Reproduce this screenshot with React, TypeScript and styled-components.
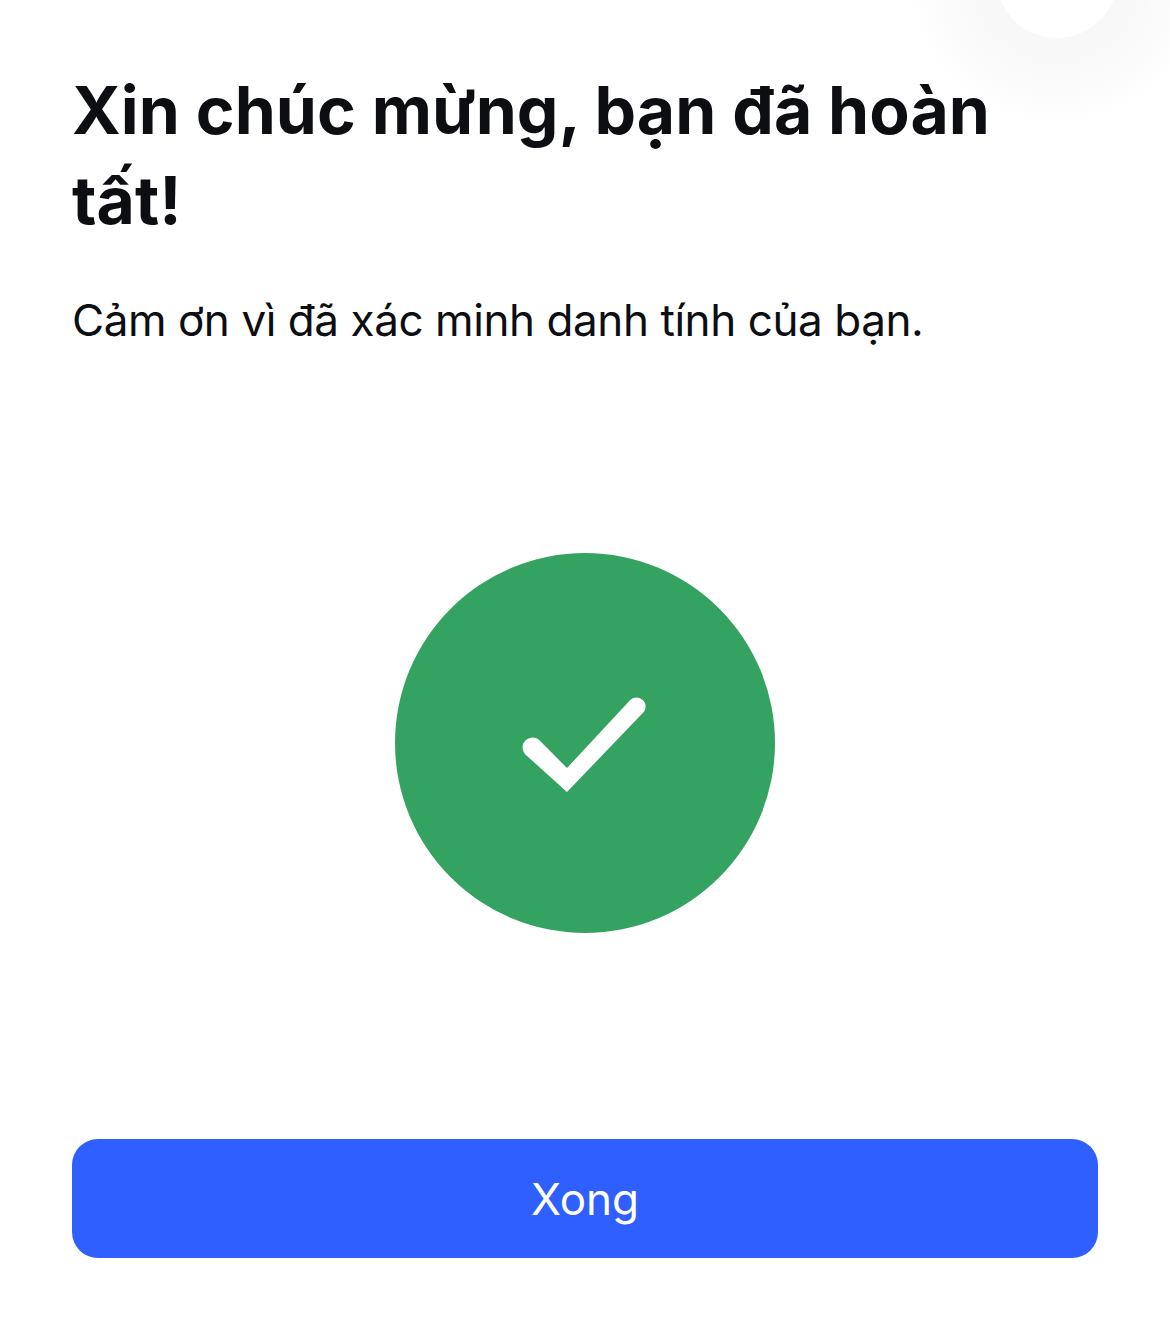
import styled, { createGlobalStyle } from 'styled-components';

const GlobalStyle = createGlobalStyle`
  html,
  body {
    margin: 0;
    padding: 0;
    background: #fff;
  }
`;

const Page = styled.div`
  position: relative;
  display: flex;
  flex-direction: column;
  width: 1170px;
  height: 1326px;
  box-sizing: border-box;
  padding: 65px 72px 68px;
  overflow: hidden;
  background: #fff;
  font-family: Inter, 'Noto Sans', sans-serif;
  color: #0c0e12;
`;

const CornerGlow = styled.div`
  position: absolute;
  top: -165px;
  left: 907px;
  width: 300px;
  height: 290px;
  background: radial-gradient(
    closest-side,
    #f8f8f8 0%,
    #f8f8f8 55%,
    #fcfcfc 80%,
    #fff 100%
  );

  &::after {
    content: '';
    position: absolute;
    left: 89px;
    top: 81px;
    width: 122px;
    height: 122px;
    border-radius: 50%;
    background: #fff;
  }
`;

const Title = styled.h1`
  position: relative;
  margin: 0;
  font-size: 66px;
  font-weight: 700;
  line-height: 90px;
  letter-spacing: 0.1px;
`;

const Subtitle = styled.p`
  margin: 45px 0 0;
  font-size: 44px;
  font-weight: 400;
  line-height: 60px;
  letter-spacing: -0.43px;
`;

const IconWrap = styled.div`
  display: flex;
  justify-content: center;
  margin-top: 203px;
`;

const DoneButton = styled.button`
  display: flex;
  align-items: center;
  justify-content: center;
  width: 100%;
  height: 119px;
  margin-top: auto;
  border: 0;
  border-radius: 26px;
  background: #2f5fff;
  color: #fff;
  font-family: inherit;
  font-size: 44px;
  font-weight: 400;
`;

export default function App() {
  return (
    <Page>
      <GlobalStyle />
      <CornerGlow />
      <Title>Xin chúc mừng, bạn đã hoàn tất!</Title>
      <Subtitle>Cảm ơn vì đã xác minh danh tính của bạn.</Subtitle>
      <IconWrap>
        <svg width="380" height="380" viewBox="0 0 380 380">
          <circle cx="190" cy="190" r="190" fill="#34a362" />
          <path
            d="M172 239 L248.5 159.2 A9 9 0 0 0 235.5 146.8 L172 215 L143.9 186.8 A10 10 0 0 0 130.1 201.2 Z"
            fill="#fff"
          />
        </svg>
      </IconWrap>
      <DoneButton>Xong</DoneButton>
    </Page>
  );
}
